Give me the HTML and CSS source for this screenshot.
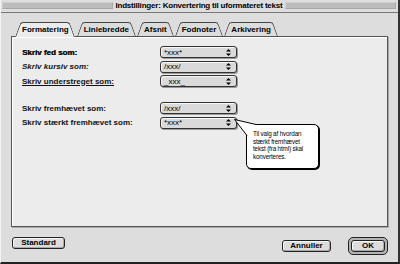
FILE: index.html
```html
<!DOCTYPE html>
<html lang="da">
<head>
    <meta charset="UTF-8">
    <title>Indstillinger: Konvertering til uformateret tekst</title>
    <link rel="stylesheet" href="styles.css">
</head>
<body>
    <div class="window">
        <div class="titlebar">
            <div class="grip"></div>
            <span class="title">Indstillinger: Konvertering til uformateret tekst</span>
            <div class="grip"></div>
        </div>
        <div class="content">
            <div class="tabs">
                <div class="tab active">Formatering</div>
                <div class="tab">Liniebredde</div>
                <div class="tab">Afsnit</div>
                <div class="tab">Fodnoter</div>
                <div class="tab">Arkivering</div>
            </div>
            <div class="panel">
                <div class="group">
                    <label class="label heavy">Skriv fed som:</label>
                    <div class="popup"><span>*xxx*</span><svg class="arrows" width="5" height="7" viewBox="0 0 5 7"><path d="M2.5 0L5 2.6H0z M2.5 7L5 4.4H0z" fill="#000"/></svg></div>
                    <label class="label italic">Skriv kursiv som:</label>
                    <div class="popup"><span>/xxx/</span><svg class="arrows" width="5" height="7" viewBox="0 0 5 7"><path d="M2.5 0L5 2.6H0z M2.5 7L5 4.4H0z" fill="#000"/></svg></div>
                    <label class="label underline">Skriv understreget som:</label>
                    <div class="popup"><span>_xxx_</span><svg class="arrows" width="5" height="7" viewBox="0 0 5 7"><path d="M2.5 0L5 2.6H0z M2.5 7L5 4.4H0z" fill="#000"/></svg></div>
                </div>
                <div class="group second">
                    <label class="label">Skriv fremhævet som:</label>
                    <div class="popup"><span>/xxx/</span><svg class="arrows" width="5" height="7" viewBox="0 0 5 7"><path d="M2.5 0L5 2.6H0z M2.5 7L5 4.4H0z" fill="#000"/></svg></div>
                    <label class="label">Skriv stærkt fremhævet som:</label>
                    <div class="popup"><span>*xxx*</span><svg class="arrows" width="5" height="7" viewBox="0 0 5 7"><path d="M2.5 0L5 2.6H0z M2.5 7L5 4.4H0z" fill="#000"/></svg></div>
                </div>
                <!-- help balloon for the last popup -->
                <div class="balloon">Til valg af hvordan<br>stærkt fremhævet<br>tekst (fra html) skal<br>konverteres.</div>
                <svg class="tail" width="24" height="18" viewBox="0 0 24 18">
                    <path d="M0.5 0.5L22.5 5.6L13 16.5z" fill="#fff"/>
                    <path d="M0.5 0.5L22.5 5.6 M0.5 0.5L13 16.5" stroke="#000" fill="none"/>
                </svg>
            </div>
            <div class="buttons">
                <button class="btn standard">Standard</button>
                <button class="btn cancel">Annuller</button>
                <div class="default-ring"><button class="btn ok">OK</button></div>
            </div>
        </div>
    </div>
</body>
</html>
```

FILE: styles.css
```css
* {
    box-sizing: border-box;
}
body {
    margin: 0;
    font-family: "Liberation Sans", Arial, sans-serif;
    background-color: #dddddd;
}
.window {
    width: 400px;
    height: 264px;
    background-color: #dddddd;
    border-left: 1px solid #f4f4f4;
    border-right: 2px solid #333;
    border-bottom: 2px solid #222;
}
.titlebar {
    display: flex;
    align-items: center;
    height: 13px;
    padding: 0 2px 1px 1px;
    border-bottom: 1px solid #777;
    background-color: #dedede;
}
.grip {
    flex: 1;
    height: 7px;
    background-color: #bcbcbc;
    border: 1px solid #a8a8a8;
    border-top-color: #cfcfcf;
    border-left-color: #cfcfcf;
}
.title {
    padding: 0 2px;
    font-size: 8px;
    font-weight: bold;
    letter-spacing: -0.2px;
    white-space: nowrap;
}
.content {
    padding: 9px 10px 0 10px;
}
.tabs {
    display: flex;
    align-items: flex-start;
    height: 14px;
    padding-left: 4px;
    position: relative;
    z-index: 1;
}
.tab {
    position: relative;
    height: 14px;
    margin-right: 1px;
    padding: 0 7px;
    font-size: 8px;
    font-weight: bold;
    line-height: 15px;
    z-index: 0;
}
.tab::before,
.tab::after {
    content: "";
    position: absolute;
    top: 0;
    bottom: 0;
    width: 60%;
    background-color: #dcdcdc;
    border-top: 1px solid #444;
    z-index: -1;
}
.tab::before {
    left: 0;
    border-left: 1px solid #444;
    border-top-left-radius: 3px;
    transform: skewX(-20deg);
    transform-origin: bottom left;
}
.tab::after {
    right: 0;
    border-right: 1px solid #444;
    border-top-right-radius: 3px;
    transform: skewX(20deg);
    transform-origin: bottom right;
}
.tab.active {
    height: 15px;
}
.tab.active::before,
.tab.active::after {
    background-color: #ececec;
}
.panel {
    position: relative;
    height: 191px;
    padding: 9px 0 0 10px;
    background-color: #ececec;
    border: 1px solid #555;
    box-shadow: inset 1px 1px 0 #fff, 1px 1px 0 #aaa;
}
.group {
    display: grid;
    grid-template-columns: 138px 77px;
    grid-auto-rows: 12px;
    row-gap: 2.5px;
    align-items: center;
}
.group.second {
    margin-top: 15px;
}
.label {
    font-size: 8px;
    font-weight: bold;
    color: #111;
    white-space: nowrap;
}
.label.heavy {
    text-shadow: 0.4px 0 0 #111;
}
.label.italic {
    font-style: italic;
}
.label.underline {
    text-decoration: underline;
}
.popup {
    display: flex;
    align-items: center;
    height: 12px;
    padding: 0 5px 0 3px;
    font-size: 8px;
    background-color: #dadada;
    border: 1px solid #333;
    border-radius: 3px;
    box-shadow: inset 1px 1px 0 #f6f6f6, 1px 1px 0 #999;
}
.popup .arrows {
    margin-left: auto;
}
.tail {
    position: absolute;
    left: 222px;
    top: 82px;
}
.balloon {
    position: absolute;
    left: 234px;
    top: 87px;
    width: 73px;
    height: 45px;
    padding: 5px 0 0 6px;
    font-size: 6.3px;
    line-height: 7.7px;
    letter-spacing: -0.15px;
    background-color: #fff;
    border: 1px solid #000;
    border-radius: 5px;
    box-shadow: 1px 1px 0 #000;
}
.buttons {
    display: flex;
    align-items: center;
    height: 18px;
    margin-top: 10px;
    padding-left: 1px;
}
.btn {
    display: block;
    height: 12px;
    padding: 0;
    font-family: "Liberation Sans", Arial, sans-serif;
    font-size: 8px;
    font-weight: bold;
    line-height: 10px;
    color: #000;
    background-color: #dcdcdc;
    border: 1px solid #222;
    border-radius: 3px;
    box-shadow: inset 1px 1px 0 #f8f8f8, inset -1px -1px 0 #aaa;
}
.standard {
    align-self: flex-start;
    width: 53px;
}
.cancel {
    width: 49px;
    margin-left: auto;
}
.default-ring {
    display: flex;
    width: 40px;
    height: 18px;
    margin-left: 17px;
    padding: 2px;
    background-color: #b4b4b4;
    border: 1px solid #222;
    border-radius: 5px;
}
.ok {
    width: 100%;
}
```
